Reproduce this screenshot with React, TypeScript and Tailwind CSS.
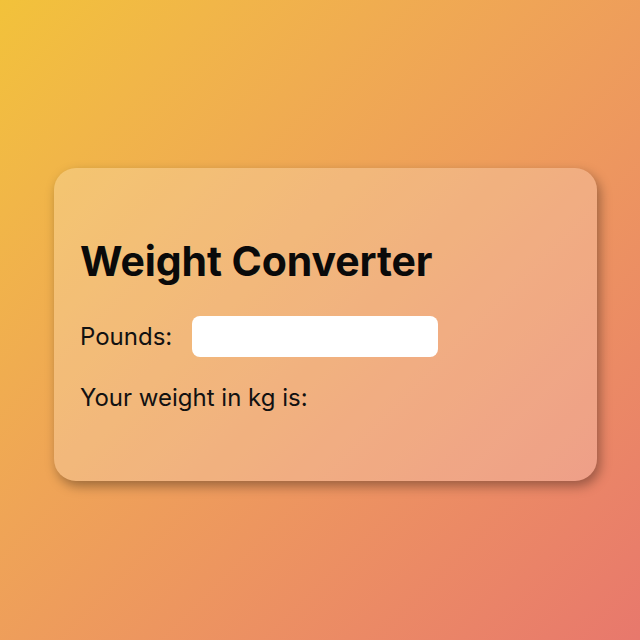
import { useState } from 'react'

export default function App() {
  const [pounds, setPounds] = useState('')
  const kg = pounds !== '' && !isNaN(Number(pounds)) ? (Number(pounds) / 2.2046).toFixed(2) : ''

  return (
    <div className="w-[640px] h-[640px] flex items-center justify-center pl-[11px] pt-[9px] bg-gradient-to-br from-[#f2c23a] to-[#e8786c] font-['Inter',sans-serif]">
      <div className="w-[543px] h-[313px] rounded-[22px] bg-white/[0.22] shadow-[3px_5px_12px_rgba(0,0,0,0.35)] pl-[26px] pt-[69px] flex flex-col">
        <h1 className="text-[41px] leading-[48px] font-bold text-[#0a0a0a] tracking-[-0.1px]">Weight Converter</h1>
        <div className="flex items-center mt-[31px]">
          <label className="text-[24px] leading-[30px] text-[#111] w-[112px]">Pounds:</label>
          <input
            value={pounds}
            onChange={(e) => setPounds(e.target.value)}
            className="w-[246px] h-[41px] rounded-[8px] bg-white outline-none px-3 text-[20px]"
          />
        </div>
        <p className="text-[24px] leading-[30px] text-[#111] mt-[26px]">Your weight in kg is: {kg}</p>
      </div>
    </div>
  )
}
